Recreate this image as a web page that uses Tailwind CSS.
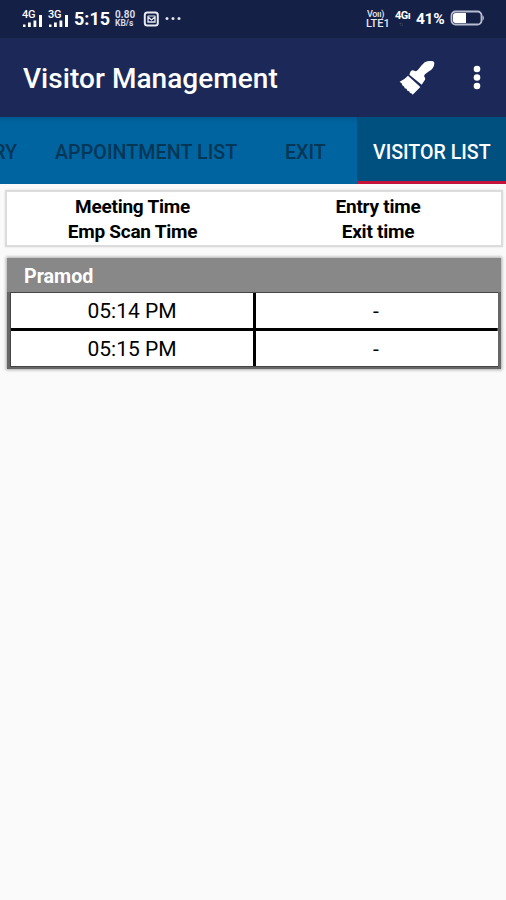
<!DOCTYPE html>
<html lang="en">
<head>
<meta charset="utf-8">
<title>Visitor Management</title>
<script src="https://cdn.jsdelivr.net/npm/@tailwindcss/browser@4"></script>
</head>
<body class="w-[506px] h-[900px] overflow-hidden bg-[#fafafa] font-[Roboto,sans-serif] text-black flex flex-col">
<div class="h-[38px] shrink-0 bg-[#152047] flex items-center text-white pl-[22px] pr-[20px] whitespace-nowrap">
  <div class="w-[21px] h-[18px] flex flex-col"><span class="text-[11px] leading-[10px] font-medium tracking-[-0.3px]">4G</span>
    <svg class="-mt-[6px]" width="21" height="13" viewBox="0 0 21 13" fill="#fff"><rect x="1" y="10.500" width="2.500" height="2.500"/><rect x="6" y="8.500" width="2.800" height="4.500"/><rect x="11.500" y="6.500" width="2.800" height="6.500"/><rect x="17" y="1" width="3" height="12"/></svg></div>
  <div class="ml-[5px] w-[21px] h-[18px] flex flex-col"><span class="text-[11px] leading-[10px] font-medium tracking-[-0.3px]">3G</span>
    <svg class="-mt-[6px]" width="21" height="13" viewBox="0 0 21 13" fill="#fff"><rect x="1" y="10.500" width="2.500" height="2.500"/><rect x="6" y="8.500" width="2.800" height="4.500"/><rect x="11.500" y="6.500" width="2.800" height="6.500"/><rect x="17" y="1" width="3" height="12"/></svg></div>
  <span class="ml-[5px] w-[41px] text-[18px] leading-[20px] font-bold">5:15</span>
  <div class="w-[21px] text-[#d5d9e6] font-bold"><div class="text-[10px] leading-[9px]">0.80</div><div class="text-[8.500px] leading-[9px]">KB/s</div></div>
  <svg class="ml-[7px]" width="17" height="17" viewBox="0 0 17 17" fill="none" stroke="#e8ebf5" stroke-width="2"><rect x="1.800" y="1.500" width="13" height="13" rx="2.500"/><path d="M5 6v5h7v-5l-3.500 3z" stroke-width="1.300"/><path d="M5 5h7" stroke-width="1"/></svg>
  <svg class="ml-[5px]" width="18" height="6" viewBox="0 0 18 6" fill="#dfe3f0"><circle cx="2" cy="2.500" r="1.500"/><circle cx="8" cy="2.500" r="1.500"/><circle cx="14" cy="2.500" r="1.500"/></svg>
  <div class="ml-auto w-[29px] pt-[1px] font-medium text-[#e4e7f0]"><div class="pl-[1px] text-[9px] leading-[9px] tracking-[-0.3px]">Voıı)</div><div class="text-[11px] leading-[10px]">LTE1</div></div>
  <div class="w-[21px] h-[18px] text-[11px] leading-[12px] font-bold tracking-[-0.5px]">4Gı<div class="text-[5px] leading-[5px] text-[#69728f] pl-1">↑↓</div></div>
  <span class="w-[34px] text-[15.500px] leading-[18px] font-bold tracking-[-0.3px]">41%</span>
  <svg width="36" height="18" viewBox="0 0 36 18"><rect x="1.500" y="1.500" width="30" height="13" rx="4" fill="none" stroke="#b7bdd0" stroke-width="1.800"/><path d="M5.500 3h10.500v10h-10.500q-2.500 0-2.500-2v-6q0-2 2.500-2z" fill="#fff"/><path d="M32.500 5q3 3 0 6z" fill="#b7bdd0"/></svg>
</div>
<div class="h-[79px] shrink-0 bg-[#1c2857] flex items-center pl-[23px] pr-[18px] text-white">
  <h1 class="pt-[2px] text-[28px] leading-[32px] font-medium tracking-[0.05px] whitespace-nowrap">Visitor Management</h1>
  <svg class="ml-auto" width="36" height="34" viewBox="60 60 108 102" fill="#fff"><path d="M157 60q9 0 9 7q0 8-5 15q-4 6-11 9l-10 7q-7 5-3 11q3 5 0 9l-9 13L91 101l4-10q5-6 11-2q6 4 11-3l11-13q5-5 9-9q8-5 20-4z"/><path d="M87 104L124 138L101 161Q98 155 93 156Q92 149 85 149Q84 142 77 142Q77 135 71 134Q70 126 62 122Q76 116 87 104z"/></svg>
  <svg class="ml-[31px]" width="22" height="30" viewBox="0 0 22 30" fill="#fff"><circle cx="11" cy="6" r="3.300"/><circle cx="11" cy="14.500" r="3.300"/><circle cx="11" cy="23" r="3.300"/></svg>
</div>
<div class="h-[67px] shrink-0 flex text-[19.600px] leading-[24px] font-medium text-[#053656] whitespace-nowrap overflow-hidden bg-linear-to-b from-[#005b90] from-0% to-[#0064a0] to-10%">
  <div class="w-[17px] shrink-0 pt-[24px] flex justify-end">RY</div>
  <div class="w-[243px] shrink-0 pt-[24px] pl-[38px] tracking-[0.1px]">APPOINTMENT LIST</div>
  <div class="w-[97px] shrink-0 pt-[24px] pl-[25px]">EXIT</div>
  <div class="w-[149px] shrink-0 pt-[24px] pl-[16px] bg-[#00507f] text-white border-b-[3px] border-[#c4123b]">VISITOR LIST</div>
</div>
<section class="mt-[6px] ml-[5px] w-[498px] h-[57px] shrink-0 border-2 border-[#dcdcdc] bg-white shadow-[0_0_2px_#ddd] grid grid-cols-[247px_244px] text-center text-[19px] tracking-[-0.25px] leading-[25px] font-bold pt-[2px] pl-[2px]">
  <div><div>Meeting Time</div><div>Emp Scan Time</div></div>
  <div><div>Entry time</div><div>Exit time</div></div>
</section>
<section class="mt-[11px] ml-[7px] w-[494px] h-[111px] shrink-0 bg-[#888] shadow-[0_0_3px_1px_#aaa]">
  <h2 class="h-[34px] pl-[17px] text-[19.700px] leading-[37px] font-bold text-white">Pramod</h2>
  <div class="h-[77px] px-[3px] pb-[2px] bg-[#666]">
    <div class="h-[75px] bg-black border border-[#444] grid grid-cols-[242px_242px] grid-rows-[35px_35px] gap-[3px] text-center text-[21px] leading-[37px]">
      <div class="bg-white">05:14 PM</div><div class="bg-white pr-[2px]">-</div>
      <div class="bg-white">05:15 PM</div><div class="bg-white pr-[2px]">-</div>
    </div>
  </div>
</section>
</body>
</html>
